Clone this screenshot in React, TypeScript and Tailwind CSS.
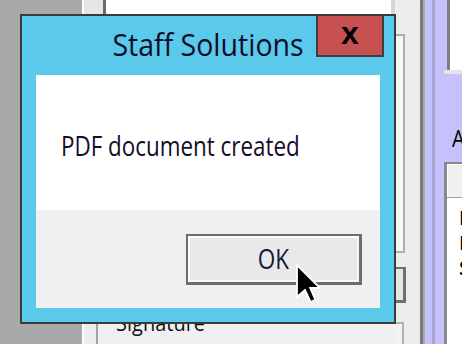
export default function App() {
  const lav = "bg-[#c4c1fd]";
  return (
    <div className="relative w-[462px] h-[344px] overflow-hidden flex font-['Open_Sans',sans-serif] text-black">
      {/* far left grey */}
      <div className="w-[82px] h-full bg-[#a9a9a9]" />

      {/* center area */}
      <div className="w-[338px] h-full flex flex-col">
        <div className="h-[14px] flex">
          <div className="w-[2px] bg-white" />
          <div className="w-[19px] bg-[#e6e6e6]" />
          <div className="w-[3px] bg-[#6a6a6a]" />
          <div className="w-[285px] bg-white" />
          <div className="w-[4px] bg-[#d6d6d6]" />
          <div className="flex-1 bg-[#ededed]" />
        </div>
        <div className="flex-1 flex">
          <div className="w-[314px] flex flex-col bg-[#efefef]">
            <div className="flex-1" />
            <div className="h-[46px] flex">
              <div className="w-[2px] bg-white" />
              <div className="w-[12px] bg-[#ececec]" />
              <div className="w-[2px] bg-[#a3a3a3]" />
              <div className="flex-1 bg-[#f0f0f0] pl-[18px] pt-[15px]">
                <span className="block w-fit text-[20px] leading-[20px] text-[#111] scale-y-[1.1]">Signature</span>
              </div>
            </div>
          </div>
          {/* strip x 396-420 */}
          <div className="w-[24px] flex flex-col bg-[#ececec]">
            <div className="h-[20px]" />
            <div className="h-[219px] w-[9px] bg-[#f6f6f6] border-t-2 border-r-2 border-b-2 border-[#adadad]" />
            <div className="h-[14px]" />
            <div className="h-[36px] w-[10px] bg-[#e6e6e6] border-t-2 border-b-[3px] border-r-[3px] border-[#6f6f6f]" />
            <div className="h-[19px]" />
            <div className="flex-1 w-[8px] bg-[#f2f2f2] border-t-2 border-r-2 border-[#b0b0b0]" />
          </div>
        </div>
      </div>

      {/* right side x 420-462 */}
      <div className="w-[42px] h-full flex">
        <div className="w-[3px] bg-[#7b7b7b]" />
        <div className="w-[2px] bg-[#a9a9a9]" />
        <div className={`w-[7px] ${lav}`} />
        <div className="w-[3px] bg-[#a7a5d2]" />
        <div className={`w-[9px] ${lav}`} />
        <div className="w-[18px] flex flex-col overflow-hidden">
          <div className="h-[70px] flex">
            <div className={`w-[3px] ${lav}`} />
            <div className="flex-1 bg-white border-l-[3px] border-[#7f7f7f]" />
          </div>
          <div className="h-[4px] bg-[#e4e4e4]" />
          <div className={`h-[88px] ${lav} pl-[8px] pt-[55px]`}>
            <span className="block text-[20px] leading-[20px] scale-y-[1.15]">A</span>
          </div>
          <div className="flex-1 flex flex-col border-l-[3px] border-t-2 border-[#898989] bg-white">
            <div className="h-[34px] bg-[#f0f0f0] border-b border-[#a0a0a0] shadow-[inset_1px_1px_0_#ffffff]" />
            <div className="pl-[12px] pt-[7px] flex flex-col text-[20px] leading-[25px] font-semibold">
              <span>N</span>
              <span>N</span>
              <span>S</span>
            </div>
          </div>
        </div>
      </div>

      {/* dialog */}
      <div className="absolute left-[20px] top-[14px] w-[376px] h-[310px] border-2 border-[#3a3a3a] bg-[#5bc9ea] flex flex-col">
        <div className="relative h-[59px] flex justify-center">
          <span className="mt-[14px] h-[28px] text-[28.5px] leading-[28px] text-[#0e0e28] scale-y-[1.1] block">
            Staff Solutions
          </span>
          <div className="absolute right-[10px] top-0 w-[68px] h-[41px] bg-[#c75050] border-2 border-t-0 border-[#3e3e3e] flex items-center justify-center">
            <span className="font-['Liberation_Sans',sans-serif] font-bold text-[32px] leading-[31px] -mt-[5px] text-black">x</span>
          </div>
        </div>
        <div className="mx-[14px] mb-[14px] flex-1 flex flex-col">
          <div className="h-[135px] bg-white pl-[25px] pt-[60px]">
            <span className="block text-[22.4px] leading-[22px] text-[#140c28] scale-y-[1.2] origin-center w-fit">
              PDF document created
            </span>
          </div>
          <div className="flex-1 bg-[#f0f0f0] flex justify-end items-start pt-[24px] pr-[18px]">
            <div className="w-[176px] h-[51px] bg-[#e9e9e9] border-t-2 border-l-2 border-b-[3px] border-r-[3px] border-[#6d6d6d] shadow-[inset_2px_2px_0_#ffffff,inset_-2px_-2px_0_#f6f6f6] flex items-center justify-center">
              <span className="block text-[22.5px] leading-[22px] text-[#16163c] scale-y-[1.2]">OK</span>
            </div>
          </div>
        </div>
      </div>

      {/* cursor */}
      <svg
        className="absolute left-[296px] top-[264px]"
        width="26"
        height="40"
        viewBox="-0.5 -0.5 13 20"
      >
        <path
          d="M0 0 L0 16 L4 12.5 L6.8 18.5 L9.2 17.4 L6.6 11.5 L11.5 11.5 Z"
          fill="#000"
          stroke="#fff"
          strokeWidth="0.9"
          strokeLinejoin="miter"
        />
      </svg>
    </div>
  );
}
